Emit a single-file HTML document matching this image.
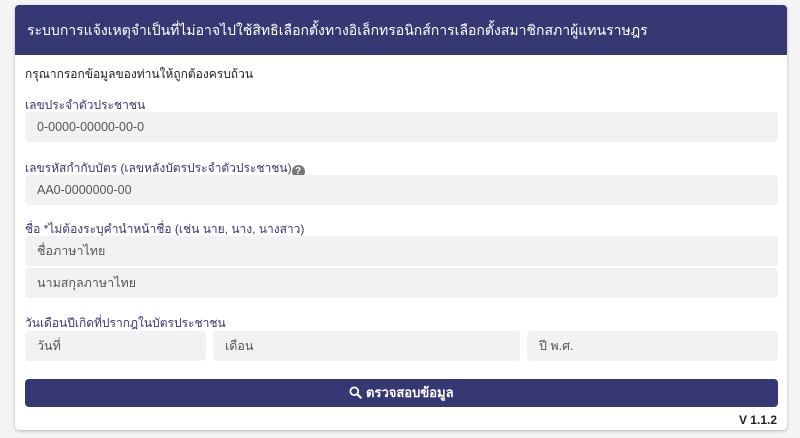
<!DOCTYPE html>
<html><head><meta charset="utf-8"><style>
*{box-sizing:border-box;margin:0;padding:0}
body{width:800px;height:438px;background:#f4f4f4;font-family:"Liberation Sans","DejaVu Sans",sans-serif;position:relative;overflow:hidden;color:#222}
.card{position:absolute;left:15px;top:5px;width:772px;height:425px;background:#fff;border-radius:4px;box-shadow:0 1px 3px rgba(0,0,0,.25)}
.hd{position:absolute;left:0;top:0;width:772px;height:50px;background:#363874;border-radius:4px 4px 0 0;color:#fff;font-size:14px;line-height:50px;padding-left:12px;white-space:nowrap;overflow:hidden}
.t{position:absolute;font-size:12px;white-space:nowrap}
.lb{color:#363874}
.in{position:absolute;background:#f1f2f4;border-radius:4px;height:30px;font-size:12.5px;line-height:30px;padding-left:12px;color:#555}
.btn{position:absolute;left:10px;top:374px;width:753px;height:28px;background:#363874;border-radius:4px;color:#fff;font-size:13px;font-weight:bold;text-align:center;line-height:28px}
.q{display:inline-block;width:13px;height:13px;border-radius:50%;background:#777;color:#fff;font-size:10px;line-height:13px;text-align:center;font-weight:bold;vertical-align:-2px}
</style></head><body>
<div class="card">
<div class="hd">ระบบการแจ้งเหตุจำเป็นที่ไม่อาจไปใช้สิทธิเลือกตั้งทางอิเล็กทรอนิกส์การเลือกตั้งสมาชิกสภาผู้แทนราษฎร</div>
<div class="t" style="left:10px;top:60px">กรุณากรอกข้อมูลของท่านให้ถูกต้องครบถ้วน</div>
<div class="t lb" style="left:10px;top:91px">เลขประจำตัวประชาชน</div>
<div class="in" style="left:10px;top:107px;width:753px">0-0000-00000-00-0</div>
<div class="t lb" style="left:10px;top:154px">เลขรหัสกำกับบัตร (เลขหลังบัตรประจำตัวประชาชน)<span class="q">?</span></div>
<div class="in" style="left:10px;top:170px;width:753px">AA0-0000000-00</div>
<div class="t lb" style="left:10px;top:215px">ชื่อ *ไม่ต้องระบุคำนำหน้าชื่อ (เช่น นาย, นาง, นางสาว)</div>
<div class="in" style="left:10px;top:231px;width:753px">ชื่อภาษาไทย</div>
<div class="in" style="left:10px;top:263px;width:753px">นามสกุลภาษาไทย</div>
<div class="t lb" style="left:10px;top:309px">วันเดือนปีเกิดที่ปรากฎในบัตรประชาชน</div>
<div class="in" style="left:10px;top:326px;width:181px">วันที่</div>
<div class="in" style="left:198px;top:326px;width:307px">เดือน</div>
<div class="in" style="left:512px;top:326px;width:251px">ปี พ.ศ.</div>
<div class="btn"><svg width="13" height="13" viewBox="0 0 16 16" style="vertical-align:-2px"><circle cx="6.5" cy="6.5" r="4.8" fill="none" stroke="#fff" stroke-width="2.2"/><path d="M10 10l4.5 4.5" stroke="#fff" stroke-width="2.6" stroke-linecap="round"/></svg> ตรวจสอบข้อมูล</div>
<div class="t" style="right:10px;top:408px;font-weight:bold;font-size:12px">V 1.1.2</div>
</div>
</body></html>
